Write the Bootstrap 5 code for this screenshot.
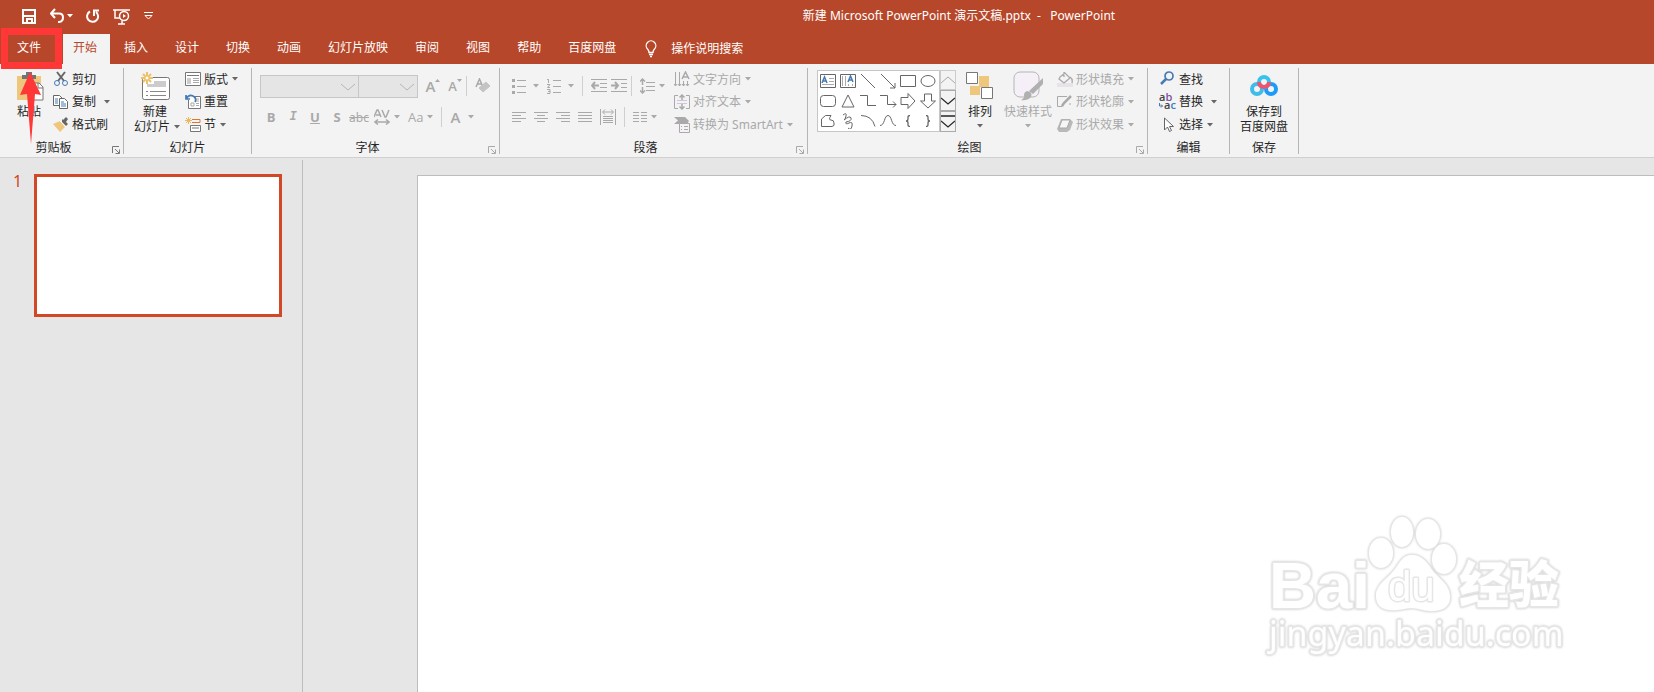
<!DOCTYPE html>
<html lang="zh-CN">
<head>
<meta charset="utf-8">
<meta name="viewport" content="width=device-width, initial-scale=1">
<title>新建 Microsoft PowerPoint 演示文稿.pptx - PowerPoint</title>
<link rel="stylesheet" href="https://cdn.jsdelivr.net/npm/bootstrap@5.3.0/dist/css/bootstrap.min.css">
<style>
body{font:12px/15px "Noto Sans","Noto Sans CJK SC",sans-serif;color:#262626;background:#e6e6e6}
svg{display:block;flex:none;fill:none}
svg:not([stroke]){stroke:currentColor}
button{font:inherit;color:inherit}
.btn{--bs-btn-padding-x:0;--bs-btn-padding-y:0;--bs-btn-border-width:0;--bs-btn-font-size:12px;--bs-btn-line-height:15px;--bs-btn-border-radius:0;--bs-btn-color:#262626;--bs-btn-disabled-color:#a9a9a9;--bs-btn-disabled-opacity:1;display:flex;align-items:center;white-space:nowrap;flex:none}
.appbar{background:#b7472a;color:#fff}
.appbar .btn{--bs-btn-color:#fff}
.quick{width:264px;height:32px;padding-left:21px;gap:13px}
.doc-title{padding-bottom:2px}
.tabs{height:32px}
.tabs .nav-link{color:#fff;padding:0 13px 0 14px;line-height:28px;height:30px}
.tabs .file-tab{width:63px;padding:0 0 0 17px}
.tabs .nav-link.active{background:#f3f3f3;color:#b7472a;padding-left:10px}
.tell-me{gap:12px}
.ribbon{background:#f3f3f3;border-bottom:1px solid #d0d0d0;padding:4px 0 3px}
.rgroup{height:86px;border-right:1px solid #b5b5b5;flex:none}
.g-clip{width:124px}.g-slide{width:128px}.g-font{width:248px}.g-para{width:308px}.g-draw{width:340px}.g-edit{width:82px}.g-save{width:69px}
.rbody{height:72px}
.rlabel{height:14px;line-height:16px;position:relative;text-align:center}
.launch{position:absolute;right:3px;bottom:0}
.tool{height:22px}
.tool+.tool{height:23px}
.tool .ico{width:16px;margin-right:3px}
.caret{width:6px;height:4px;stroke:none!important;fill:currentColor;margin-left:4px}
.btn:not(:disabled) .caret{color:#666}
.appbar .btn:not(:disabled) .caret{color:#fff;margin-left:3px}
.big{flex-direction:column;height:72px}
.big .pic{height:36px;display:flex;align-items:center}
.big .caret{margin:5px 0 0}
.paste{margin-left:14px;margin-right:9px}
.new-slide{margin:0 5px 0 6px}
.arrange{margin-left:10px}
.styles{margin:0 5px 0 10px}
.line2{display:flex;align-items:center}
.vsep{width:1px;height:20px;background:#cfcfcf;flex:none}
.iconrow{height:36px}
.iconrow+.iconrow{height:26px}
.b22{width:22px;height:22px;justify-content:center}
.fontbox{height:23px;border:1px solid #c6c6c6;background:#e5e5e5;border-radius:0;appearance:none;padding:0}
.boxwrap{position:relative;flex:none}
.boxwrap svg{position:absolute;right:4px;top:8px;color:#b5b5b5;pointer-events:none}
.face{width:99px}.size{width:59px;border-left:0}
.glyph{font-family:"Open Sans",sans-serif;font-weight:600;font-size:13px}
.g-lg{font-size:15px}
.sans-caret{margin-left:7px}
.listcol{width:174px;padding-left:12px}
.gal-wrap{margin:2px 0 0 9px}
.gallery{display:grid;grid-template-columns:repeat(6,20px);grid-auto-rows:20px;border:1px solid #c6c6c6;background:#fff;padding-right:1px;height:62px}
.gallery .btn{justify-content:center;color:#666}
.scroller{width:16px;height:62px}
.scroller .btn{height:21px;border:1px solid #aaa;justify-content:center}
.scroller .btn:first-child{border-color:#ccc;height:20px}
.panel{width:303px;border-right:1px solid #bdbdbd;margin-top:2px;padding:14px 20px 0 0;flex:none}
.num{width:34px;padding-left:13px;color:#d24726;font-size:16px;line-height:14px}
.thumb{border:3px solid #d24726;background:#fff;aspect-ratio:248/143}
.stage{padding:17px 0 0 114px}
.slide{background:#fff;border:1px solid #bdbdbd;border-right:0;border-bottom:0;position:relative}
.logo{position:absolute;right:86px;bottom:30px;fill:#fff;stroke-width:3;paint-order:stroke;stroke-linejoin:round;filter:drop-shadow(0 0 1px #ccc)}
.mark-file{position:absolute;left:1px;top:28px;width:61px;height:41px;border:7px solid #ff3737;pointer-events:none}
.mark-arrow{position:absolute;left:19px;top:72px;pointer-events:none}
</style>
</head>
<body class="vh-100 d-flex flex-column overflow-hidden position-relative">
<svg width="0" height="0" class="position-absolute"><defs>
<symbol id="dn" viewBox="0 0 6 4"><path d="M0 0h6L3 3.500z"/></symbol>
<symbol id="la" viewBox="0 0 8 8"><path d="M.5 7V.5H7M3 3l4 4M7.500 3.500v4h-4"/></symbol>
</defs></svg>

<header class="appbar">
  <div class="d-flex align-items-center">
    <div class="quick d-flex align-items-center">
      <button class="btn" aria-label="保存"><svg width="16" height="16" stroke-width="2"><path d="M2 2h12v13H2zM2 8h12M6 15v-4h5v4"/></svg></button>
      <button class="btn" aria-label="撤消"><svg width="14" height="16" stroke-width="2"><path d="M5 1L1 5.500l4 4.500M1 5.500h8q4 0 4 4t-4 4.500H8"/></svg><svg class="caret"><use href="#dn"/></svg></button>
      <button class="btn" aria-label="重复"><svg width="14" height="16" stroke-width="2"><path d="M4 3.500A5.500 5.500 0 1 0 10 4M8 8V2.500h5"/></svg></button>
      <button class="btn" aria-label="从头开始"><svg width="18" height="17" stroke-width="1.500"><path d="M0 2h17M2 2v8h5M5 16h7M9 13v3"/><circle cx="11" cy="8" r="4.500" fill="#b7472a"/><path d="M10 6l3 2-3 2z" fill="#fff" stroke="none"/></svg></button>
      <button class="btn" aria-label="自定义"><svg width="9" height="8"><path d="M0 .5h9M1 3.500h7L4.500 7z"/></svg></button>
    </div>
    <div class="flex-grow-1 text-center doc-title"><span>新建 Microsoft PowerPoint 演示文稿.pptx&nbsp; -&nbsp;&nbsp; PowerPoint</span></div>
  </div>
  <nav class="tabs d-flex align-items-end">
    <a class="nav-link file-tab" href="#">文件</a>
    <a class="nav-link active" href="#">开始</a>
    <a class="nav-link" href="#">插入</a>
    <a class="nav-link" href="#">设计</a>
    <a class="nav-link" href="#">切换</a>
    <a class="nav-link" href="#">动画</a>
    <a class="nav-link" href="#">幻灯片放映</a>
    <a class="nav-link" href="#">审阅</a>
    <a class="nav-link" href="#">视图</a>
    <a class="nav-link" href="#">帮助</a>
    <a class="nav-link" href="#">百度网盘</a>
    <a class="nav-link tell-me d-flex align-items-center" href="#"><svg width="16" height="18" stroke-width="1.300"><path d="M6 12.500q0-2-1.500-3.500a4.800 4.800 0 1 1 7 0Q10 10.500 10 12.500zM6 14.500h4M7 16.500h2"/></svg>操作说明搜索</a>
  </nav>
</header>

<section class="ribbon d-flex">
  <div class="rgroup g-clip">
    <div class="rbody d-flex">
      <button class="btn big paste"><span class="pic"><svg width="30" height="30"><path d="M3 5h24v24H3z" fill="#eec77c" stroke="none"/><path d="M8 8V4h4V1h6v3h4v4z" fill="#737373" stroke="none"/><path d="M18 12h7l4 4v13H18z" fill="#fff" stroke="#777"/><path d="M24 12v5h5" stroke="#777"/></svg></span>粘贴</button>
      <div>
        <button class="btn tool"><svg class="ico" height="16"><path d="M4 1l7 9M12 1L5 10" stroke="#666" stroke-width="2"/><circle cx="4" cy="12" r="2.500" stroke="#447ab5"/><circle cx="12" cy="12" r="2.500" stroke="#447ab5"/></svg>剪切</button>
        <button class="btn tool"><svg class="ico" height="16" stroke="#666"><path d="M.5 1.500h6l3 3v7h-9z" fill="#fff"/><path d="M6.500 4.500h5l3 3v7h-8z" fill="#fff"/><path d="M2 5h3M2 7h3M2 9h3M8 8h3M8 10h5M8 12h5" stroke="#447ab5"/></svg>复制<svg class="caret ms-2"><use href="#dn"/></svg></button>
        <button class="btn tool"><svg class="ico" height="16"><path d="M9 5l4 4 2-2-2-2 2-3-2-2-3 3-1-1z" fill="#666" stroke="none"/><path d="M7 4l5 6-5 5-7-8z" fill="#eec77c" stroke="none"/><path d="M7 4l6 6" stroke="#fff"/></svg>格式刷</button>
      </div>
    </div>
    <div class="rlabel pe-3">剪贴板<button class="btn launch" aria-label="剪贴板选项"><svg width="8" height="8" stroke="#777"><use href="#la"/></svg></button></div>
  </div>

  <div class="rgroup g-slide">
    <div class="rbody d-flex">
      <button class="btn big new-slide"><span class="pic"><svg width="30" height="30"><rect x="2.500" y="6.500" width="27" height="22" rx="2" fill="#fff" stroke="#777"/><path d="M14 10h12v6H7v-3h7z" fill="#ccc" stroke="none"/><path d="M6 20.500h2M10 20.500h16M6 24.500h2M10 24.500h16" stroke="#888"/><path d="M7 1v12M1 7h12M3 3l8 8M11 3l-8 8" stroke="#eec06a" stroke-width="2"/><circle cx="7" cy="7" r="2" fill="#fff" stroke="#eec06a"/></svg></span>新建<span class="line2 ps-1">幻灯片<svg class="caret m-0 ms-1"><use href="#dn"/></svg></span></button>
      <div>
        <button class="btn tool"><svg class="ico" height="16" stroke="#777"><path d="M.5 1.500h15v13H.5z" fill="#fff"/><path d="M2 4.500h12"/><path d="M2 7h4v6H2z" fill="#ccc" stroke="none"/><path d="M8 7.500h6M8 9.500h6M8 11.500h6" stroke="#aaa"/></svg>版式<svg class="caret"><use href="#dn"/></svg></button>
        <button class="btn tool"><svg class="ico" height="16" stroke="#777"><path d="M3.500 6v8.500h12v-12H9" fill="#fff"/><path d="M10 5h4M10 7h4M6 9h3v3H6zM11 9.500h3M11 11.500h3" stroke="#aaa"/><path d="M1 1v4h4M1 5q3-5 7-3t2 6" stroke="#447ab5" stroke-width="1.700"/></svg>重置</button>
        <button class="btn tool"><svg class="ico" height="16"><path d="M3.500 0v7M0 3.500h7M1 1l5 5M6 1L1 6" stroke="#eeb85a"/><path d="M7 2.500h8v3H7" stroke="#dd7632"/><path d="M5.500 8.500h10v6h-10z" fill="#fff" stroke="#777"/><path d="M7 11h7" stroke="#777"/></svg>节<svg class="caret"><use href="#dn"/></svg></button>
      </div>
    </div>
    <div class="rlabel">幻灯片</div>
  </div>

  <div class="rgroup g-font">
    <div class="rbody px-2">
      <div class="d-flex align-items-center iconrow">
        <div class="boxwrap"><input class="fontbox face d-block" aria-label="字体" disabled><svg width="14" height="9"><path d="M0 1l7 6 7-6"/></svg></div>
        <div class="boxwrap"><input class="fontbox size d-block" aria-label="字号" disabled><svg width="14" height="9"><path d="M0 1l7 6 7-6"/></svg></div>
        <button class="btn ms-1 b22 glyph g-lg" disabled aria-label="增大字号">A<svg width="5" height="14" stroke="none"><path d="M0 3h5L2.500 0z" fill="#a9a9a9"/></svg></button>
        <button class="btn b22 glyph" disabled aria-label="减小字号">A<svg width="5" height="16" stroke="none"><path d="M0 1h5L2.500 4z" fill="#a9a9a9"/></svg></button>
        <span class="vsep"></span>
        <button class="btn ms-2" disabled aria-label="清除格式"><svg width="16" height="16"><path d="M1 9L4.500 1 8 9M2 6h5" stroke-width="1.500"/><path d="M11 4l4 4-7 6-4-4z" fill="#c4c4c4" stroke="#c4c4c4"/></svg></button>
      </div>
      <div class="d-flex align-items-center iconrow">
        <button class="btn b22 glyph fw-bold" disabled>B</button>
        <button class="btn b22 fst-italic fw-bold font-monospace" disabled>I</button>
        <button class="btn b22 glyph fw-bold text-decoration-underline" disabled>U</button>
        <button class="btn b22 glyph fw-bold" disabled>S</button>
        <button class="btn b22 text-decoration-line-through" disabled>abc</button>
        <button class="btn ms-1" disabled aria-label="字符间距"><svg width="16" height="16" stroke-width="1.500"><path d="M0 8L3 1h1l3 7M2 6h4M8 1l3 7h1l3-7M1 13h14M4 10.500L1 13l3 2.500M12 10.500l3 2.500-3 2.500"/></svg><svg class="caret"><use href="#dn"/></svg></button>
        <button class="btn glyph fw-normal ms-2" disabled>Aa<svg class="caret"><use href="#dn"/></svg></button>
        <span class="vsep ms-2"></span>
        <button class="btn ms-1 glyph g-lg" disabled aria-label="字体颜色"><span class="px-1">A</span><svg class="caret"><use href="#dn"/></svg></button>
      </div>
    </div>
    <div class="rlabel pe-3">字体<button class="btn launch" disabled aria-label="字体选项"><svg width="8" height="8"><use href="#la"/></svg></button></div>
  </div>

  <div class="rgroup g-para">
    <div class="rbody d-flex">
      <div class="listcol">
        <div class="d-flex align-items-center iconrow">
          <button class="btn" disabled aria-label="项目符号"><svg width="14" height="16"><path d="M5 2.500h9M5 8.500h9M5 14.500h9"/><path d="M0 2.500h3M0 8.500h3M0 14.500h3" stroke-width="3"/></svg><svg class="caret sans-caret"><use href="#dn"/></svg></button>
          <button class="btn ms-2" disabled aria-label="编号"><svg width="14" height="16"><path d="M6 2.500h8M6 8.500h8M6 14.500h8M0 1.500h1.500V5M0 6.500h3L.5 9.500H3M0 11.500h3v4H0M1 13.500h2"/></svg><svg class="caret sans-caret"><use href="#dn"/></svg></button>
          <span class="vsep mx-2"></span>
          <button class="btn" disabled aria-label="减少缩进"><svg width="16" height="14"><path d="M0 .5h16M9 4.500h7M9 8.500h7M0 12.500h16"/><path d="M8 6.500H1M4 3L1 6.500 4 10" stroke-width="2"/></svg></button>
          <button class="btn mx-1" disabled aria-label="增加缩进"><svg width="16" height="14"><path d="M0 .5h16M10 4.500h6M10 8.500h6M0 12.500h16"/><path d="M0 6.500h7M4 3l3 3.500L4 10" stroke-width="2"/></svg></button>
          <span class="vsep"></span>
          <button class="btn ms-2" disabled aria-label="行距"><svg width="15" height="16"><path d="M6 4.500h9M6 8.500h9M6 12.500h9"/><path d="M2.500 1v6M0 3.500L2.500 1 5 3.500M2.500 9v6M0 12.500L2.500 15 5 12.500" stroke-width="1.500"/></svg><svg class="caret"><use href="#dn"/></svg></button>
        </div>
        <div class="d-flex align-items-center iconrow">
          <div class="d-flex gap-2">
          <button class="btn" disabled aria-label="左对齐"><svg width="14" height="12"><path d="M0 1.500h14M0 4.500h9M0 7.500h14M0 10.500h9"/></svg></button>
          <button class="btn" disabled aria-label="居中"><svg width="14" height="12"><path d="M0 1.500h14M3 4.500h8M0 7.500h14M3 10.500h8"/></svg></button>
          <button class="btn" disabled aria-label="右对齐"><svg width="14" height="12"><path d="M0 1.500h14M5 4.500h9M0 7.500h14M5 10.500h9"/></svg></button>
          <button class="btn" disabled aria-label="两端对齐"><svg width="14" height="12"><path d="M0 1.500h14M0 4.500h14M0 7.500h14M0 10.500h14"/></svg></button>
          <button class="btn" disabled aria-label="分散对齐"><svg width="16" height="16"><path d="M.5 0v16M15.500 0v16M3 3h10M5 .5L2.500 3 5 5.500M11 .5L13.500 3 11 5.500M3 7.500h10M3 9.500h10M3 11.500h10M3 13.500h10"/></svg></button>
          </div>
          <span class="vsep mx-2"></span>
          <button class="btn" disabled aria-label="分栏"><svg width="14" height="12"><path d="M0 1.500h6M8 1.500h6M0 4.500h6M8 4.500h6M0 7.500h6M8 7.500h6M0 10.500h6M8 10.500h6"/></svg><svg class="caret"><use href="#dn"/></svg></button>
        </div>
      </div>
      <div>
        <button class="btn tool" disabled><svg class="ico" height="16"><path d="M1.500 1v14M5.500 1v14M9.500 10v5M13.500 10v5M0 13l1.500 2L3 13M4 13l1.500 2L7 13M8 13l1.500 2 1.500-2M12 13l1.500 2 1.500-2"/><path d="M8 8l3.500-7L15 8M9 6h5" stroke-width="1.500"/></svg>文字方向<svg class="caret"><use href="#dn"/></svg></button>
        <button class="btn tool" disabled><svg class="ico" height="16"><path d="M4 1.500H.5v13H4M12 1.500h3.500v13H12" /><path d="M3 6.500h10M3 9.500h10" stroke="#d3c4d8"/><path d="M8 6V1M5.500 3.500L8 1l2.500 2.500M8 10v5M5.500 12.500L8 15l2.500-2.500" stroke-width="1.500"/></svg>对齐文本<svg class="caret"><use href="#dn"/></svg></button>
        <button class="btn tool" disabled><svg class="ico" height="16"><path d="M0 0h11l4 4-2 3H0l4-3.500z" fill="#a9a9a9" stroke="none"/><path d="M5.500 6.500h10v9h-10z" fill="#f6f1f7"/><path d="M7 9.500h1M10 9.500h4M7 12.500h1M10 12.500h4"/></svg>转换为 SmartArt<svg class="caret"><use href="#dn"/></svg></button>
      </div>
    </div>
    <div class="rlabel pe-3">段落<button class="btn launch" disabled aria-label="段落选项"><svg width="8" height="8"><use href="#la"/></svg></button></div>
  </div>

  <div class="rgroup g-draw">
    <div class="rbody d-flex">
      <div class="d-flex gal-wrap">
      <div class="gallery">
        <button class="btn" aria-label="文本框"><svg width="16" height="14"><path d="M.5.500h15v13H.5z"/><path d="M2 9l2.500-6L7 9M3 7h3" stroke="#447ab5" stroke-width="1.500"/><path d="M9 4.500h5M9 7.500h5M2 10.500h12" stroke="#aaa"/></svg></button>
        <button class="btn" aria-label="竖排文本框"><svg width="16" height="14"><path d="M.5.500h15v13H.5z"/><path d="M8 8l2.500-6L13 8M9 6h3" stroke="#447ab5" stroke-width="1.500"/><path d="M2.500 2v10M5.500 2v10M8.500 10v2M12.500 10v2" stroke="#aaa"/></svg></button>
        <button class="btn" aria-label="直线"><svg width="16" height="16"><path d="M1 1l14 14"/></svg></button>
        <button class="btn" aria-label="箭头"><svg width="16" height="16"><path d="M1 1l14 14M15 10v5h-5"/></svg></button>
        <button class="btn" aria-label="矩形"><svg width="16" height="12"><path d="M.5.500h15v11H.5z"/></svg></button>
        <button class="btn" aria-label="椭圆"><svg width="16" height="12"><ellipse cx="8" cy="6" rx="7" ry="5.500"/></svg></button>
        <button class="btn" aria-label="圆角矩形"><svg width="16" height="12"><rect x=".5" y=".5" width="15" height="11" rx="3"/></svg></button>
        <button class="btn" aria-label="三角形"><svg width="14" height="14"><path d="M7 1l6 12H1z"/></svg></button>
        <button class="btn" aria-label="肘形连接符"><svg width="16" height="14"><path d="M0 1.500h7.500v10H16"/></svg></button>
        <button class="btn" aria-label="肘形箭头"><svg width="17" height="14"><path d="M0 1.500h7.500v9H16M13 7.500l3 3-3 3"/></svg></button>
        <button class="btn" aria-label="右箭头"><svg width="16" height="16"><path d="M1 4.500h7v-4L15 8l-7 7.500v-4H1z"/></svg></button>
        <button class="btn" aria-label="下箭头"><svg width="16" height="16"><path d="M4.500 1v7h-4L8 15l7.500-7h-4V1z"/></svg></button>
        <button class="btn" aria-label="任意多边形"><svg width="16" height="14"><path d="M1.500 12.500V5l4-3.500H11Q8 6 11 6t3 3q1 3-2 3.500z"/></svg></button>
        <button class="btn" aria-label="自由曲线"><svg width="14" height="16"><path d="M2 2q4-3 3 1T3 7q6-5 7-2T5 9q-1 3 3 1t3 3-4 2"/></svg></button>
        <button class="btn" aria-label="弧形"><svg width="16" height="14"><path d="M1 1.500q11 0 14 11"/></svg></button>
        <button class="btn" aria-label="曲线"><svg width="16" height="14"><path d="M0 11.500C5 11.500 4 1.500 8 1.500S11 11.500 16 11.500"/></svg></button>
        <button class="btn" aria-label="左大括号"><svg width="6" height="12"><path d="M5 .5Q3 .5 3 2v2q0 2-2 2 2 0 2 2v2q0 1.500 2 1.500" stroke-width="1.300"/></svg></button>
        <button class="btn" aria-label="右大括号"><svg width="6" height="12"><path d="M1 .5q2 0 2 1.500v2q0 2 2 2-2 0-2 2v2q0 1.500-2 1.500" stroke-width="1.300"/></svg></button>
      </div>
      <div class="scroller">
        <button class="btn w-100" disabled aria-label="向上"><svg width="14" height="8"><path d="M0 7l7-6 7 6"/></svg></button>
        <button class="btn w-100" aria-label="向下"><svg width="14" height="8" stroke-width="1.300"><path d="M0 1l7 6 7-6"/></svg></button>
        <button class="btn w-100" aria-label="更多"><svg width="14" height="14" stroke-width="1.300"><path d="M0 1h14M0 6l7 6 7-6"/></svg></button>
      </div>
      </div>
      <button class="btn big arrange"><span class="pic"><svg width="28" height="28"><path d="M13 4h10v11H13zM4 14h10v9H4z" fill="#eec77c" stroke="none"/><path d="M.5.500h11v11H.5zM15.500 15.500h11v11h-11z" fill="#fff" stroke="#777"/></svg></span>排列<svg class="caret"><use href="#dn"/></svg></button>
      <button class="btn big styles" disabled><span class="pic"><svg width="30" height="30"><rect x="1" y="1" width="25" height="25" rx="6" fill="#f5f0f7" stroke="#b5b5b5"/><path d="M30 7v6L20 23l-4-3zM14 20q6 1 4 6-4 4-10 3 4-2 3-5 0-3 3-4z" fill="#b0b0b0" stroke="none"/></svg></span>快速样式<svg class="caret"><use href="#dn"/></svg></button>
      <div>
        <button class="btn tool" disabled><svg class="ico" height="17"><path d="M0 12h16v4H0z" fill="#e8e2e9" stroke="none"/><path d="M7 1v5M3 6l5-4 5 5-6 5-5-4zM13 6q3 2 2 6" stroke-width="1.300"/></svg>形状填充<svg class="caret"><use href="#dn"/></svg></button>
        <button class="btn tool" disabled><svg class="ico" height="16"><path d="M10 2.500H.5v10h5M13 9v2"/><path d="M14 2L7 9l-2 3" stroke-width="2.500"/></svg>形状轮廓<svg class="caret"><use href="#dn"/></svg></button>
        <button class="btn tool" disabled><svg class="ico" height="16"><path d="M4 2h9l3 3-3 8-3 2H2l-2-3z" fill="#b9b9b9" stroke="none"/><path d="M5 3h8l-3 8H2z" fill="#f7f5f8"/></svg>形状效果<svg class="caret"><use href="#dn"/></svg></button>
      </div>
    </div>
    <div class="rlabel pe-3">绘图<button class="btn launch" disabled aria-label="绘图选项"><svg width="8" height="8"><use href="#la"/></svg></button></div>
  </div>

  <div class="rgroup g-edit">
    <div class="rbody ps-2">
      <div class="ps-1">
      <button class="btn tool"><svg class="ico" height="16"><circle cx="9" cy="5" r="4" stroke="#447ab5" stroke-width="1.700"/><path d="M6 8l-5 5" stroke="#447ab5" stroke-width="2.500"/></svg>查找</button>
      <button class="btn tool"><svg class="ico overflow-visible" height="18" stroke="none" font-size="11" font-weight="600" font-family="Open Sans"><text x="-1" y="8" fill="#444">a<tspan fill="#8050a0">b</tspan></text><text x="4" y="16" fill="#444">a<tspan fill="#447ab5">c</tspan></text><path d="M-.5 10v3h3M1 11.500L2.500 13 1 14.500" stroke="#447ab5"/></svg>替换<svg class="caret ms-2"><use href="#dn"/></svg></button>
      <button class="btn tool"><svg class="ico" height="16"><path d="M4.500 1v12l3-3 2 4.500 2-1-2-4h4z" fill="#fff" stroke="#666"/></svg>选择<svg class="caret"><use href="#dn"/></svg></button>
      </div>
    </div>
    <div class="rlabel">编辑</div>
  </div>

  <div class="rgroup g-save">
    <div class="rbody d-flex justify-content-center">
      <button class="btn big"><span class="pic"><svg width="28" height="24" stroke-width="4"><circle cx="7" cy="15" r="5" stroke="#3fbde8"/><circle cx="21" cy="15" r="5" stroke="#1d9bf5"/><circle cx="14" cy="8" r="5" stroke="#35c4ee"/><path d="M9 8a5 5 0 0 0 10 0" stroke="#f4516c"/></svg></span>保存到<span>百度网盘</span></button>
    </div>
    <div class="rlabel">保存</div>
  </div>
</section>

<main class="d-flex flex-grow-1">
  <aside class="panel d-flex align-items-start">
    <span class="num">1</span><div class="thumb flex-grow-1"></div>
  </aside>
  <div class="stage flex-grow-1 d-flex">
    <div class="slide flex-grow-1">
      <svg class="logo" width="304" height="152" stroke="#e6e6e6" role="img" aria-label="Baidu 经验">
        <text x="5" y="98" font-family="Liberation Sans" font-weight="700" font-size="65">Bai</text>
        <g stroke-width="2"><ellipse cx="117" cy="43" rx="12" ry="15"/><ellipse cx="138" cy="22" rx="11" ry="15"/><ellipse cx="164" cy="24" rx="12" ry="15"/><ellipse cx="180" cy="49" rx="12" ry="15"/>
        <path d="M148 45c10 0 16 8 20 15 6 8 18 14 18 27 0 11-9 14-19 14-8 0-12-3-19-3s-13 3-21 2c-9 0-15-5-15-14 0-12 12-17 19-27 5-7 8-14 17-14z"/></g>
        <text x="124" y="91" font-family="Liberation Sans" font-size="42">du</text>
        <text x="195" y="93" font-family="Noto Sans CJK SC" font-weight="900" font-size="50">经验</text>
        <text x="5" y="136" font-family="Noto Sans" font-size="34">jingyan.baidu.com</text>
      </svg>
    </div>
  </div>
</main>
<div class="mark-file"></div>
<svg class="mark-arrow" width="24" height="74" stroke="none"><path d="M11 0l11 23-6-1-4 50-4-50-7 1z" fill="#ff3737"/></svg>
<script src="https://cdn.jsdelivr.net/npm/bootstrap@5.3.0/dist/js/bootstrap.bundle.min.js"></script>
</body>
</html>
